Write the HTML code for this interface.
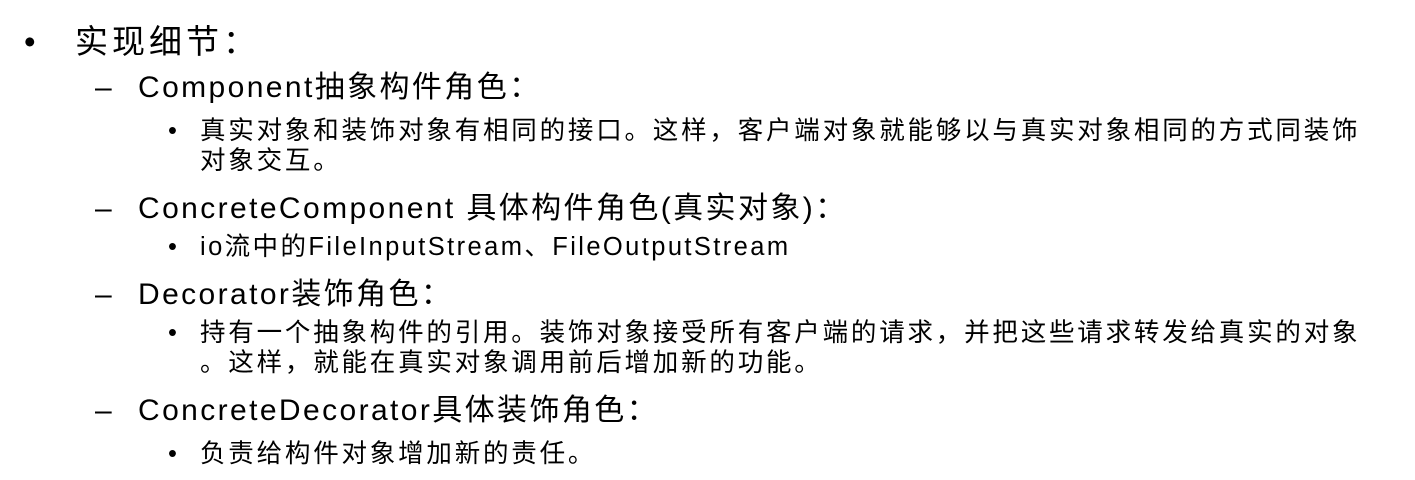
<!DOCTYPE html>
<html><head><meta charset="utf-8"><style>
body{margin:0;width:1415px;height:480px;background:#fff;position:relative;overflow:hidden;font-family:"Liberation Sans","Noto Sans CJK SC",sans-serif;color:#000}
.l{position:absolute;white-space:nowrap;line-height:1;}
.a{font-size:33px;letter-spacing:4px}
.b{font-size:30px;letter-spacing:2.4px}
.c{font-size:25.5px;letter-spacing:2.8px}
</style></head><body>
<div class="l a" style="left:24px;top:25px">•</div>
<div class="l a" style="left:75px;top:25px">实现细节：</div>

<div class="l b" style="left:95px;top:73px">–</div>
<div class="l b" style="left:138px;top:73px">Component抽象构件角色：</div>
<div class="l c" style="left:168px;top:119px">•</div>
<div class="l c" style="left:200px;top:119px">真实对象和装饰对象有相同的接口。这样，客户端对象就能够以与真实对象相同的方式同装饰</div>
<div class="l c" style="left:200px;top:149px">对象交互。</div>

<div class="l b" style="left:95px;top:194px">–</div>
<div class="l b" style="left:138px;top:194px">ConcreteComponent 具体构件角色(真实对象)：</div>
<div class="l c" style="left:168px;top:235px">•</div>
<div class="l c" style="left:200px;top:235px;letter-spacing:2.4px">io流中的FileInputStream、FileOutputStream</div>

<div class="l b" style="left:95px;top:280px">–</div>
<div class="l b" style="left:138px;top:280px">Decorator装饰角色：</div>
<div class="l c" style="left:168px;top:321px">•</div>
<div class="l c" style="left:200px;top:321px">持有一个抽象构件的引用。装饰对象接受所有客户端的请求，并把这些请求转发给真实的对象</div>
<div class="l c" style="left:200px;top:351px">。这样，就能在真实对象调用前后增加新的功能。</div>

<div class="l b" style="left:95px;top:396px">–</div>
<div class="l b" style="left:138px;top:396px">ConcreteDecorator具体装饰角色：</div>
<div class="l c" style="left:168px;top:442px">•</div>
<div class="l c" style="left:200px;top:442px">负责给构件对象增加新的责任。</div>
</body></html>
